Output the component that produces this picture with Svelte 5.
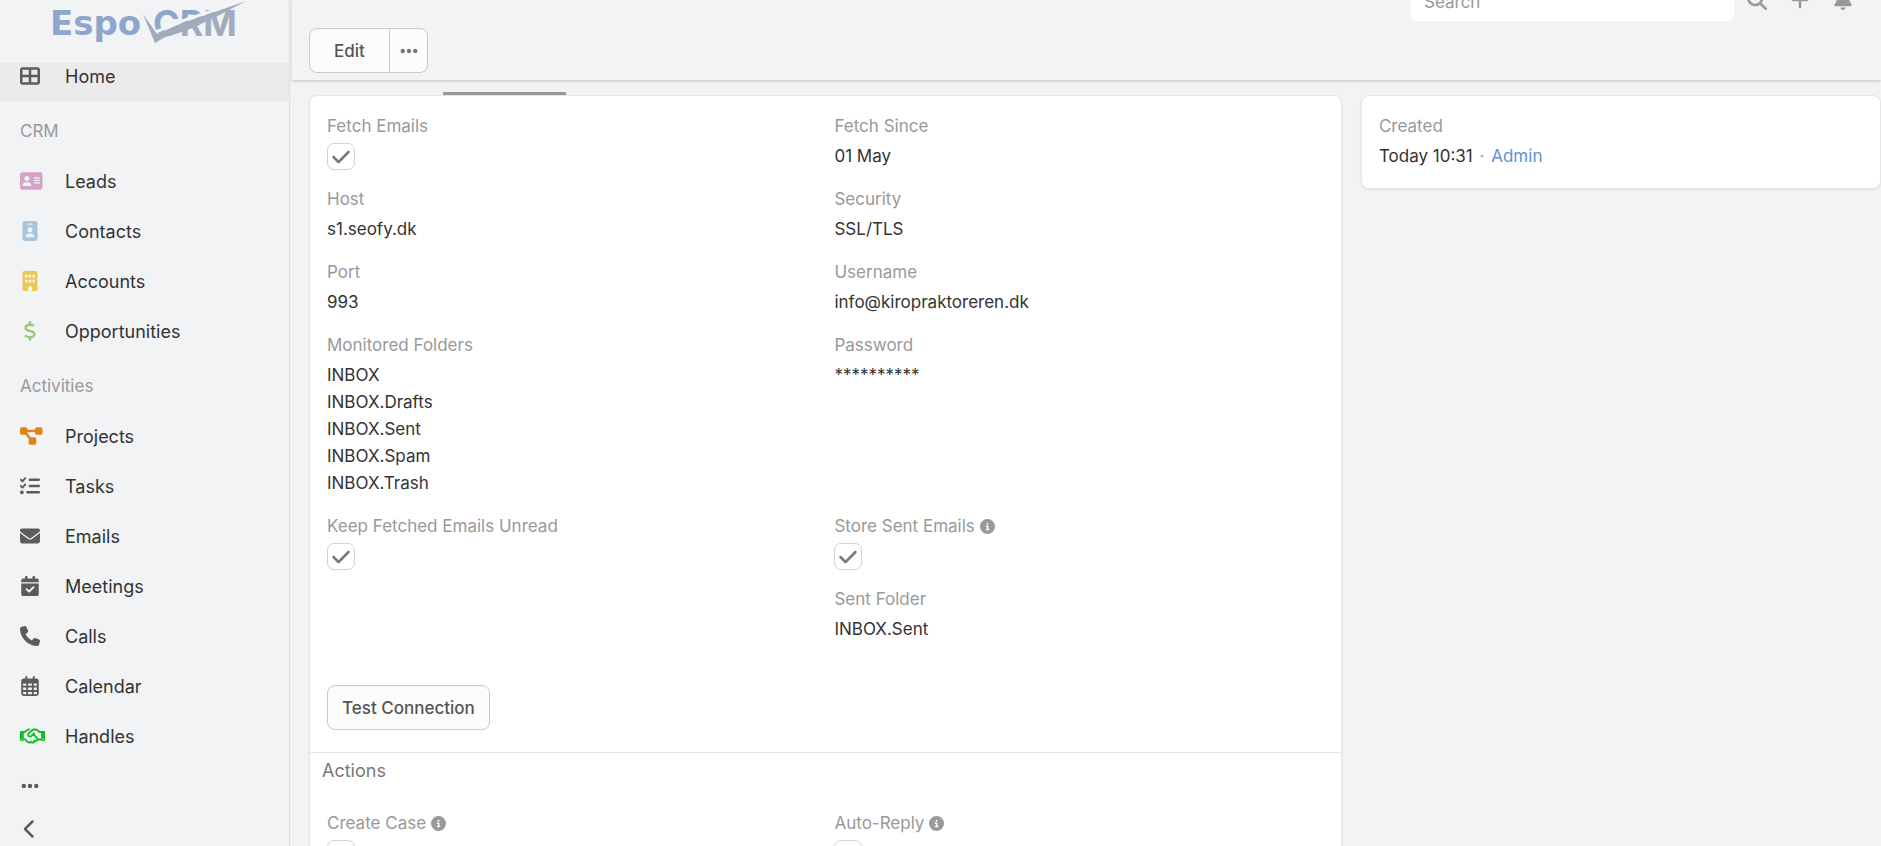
<script>
  // Solid icon set, drawn on a 512 unit high grid
  const icons = {
    home: { w: 512, d: 'M448 96l0 128-160 0 0-128 160 0zm0 192l0 128-160 0 0-128 160 0zM224 224L64 224 64 96l160 0 0 128zM64 288l160 0 0 128L64 416l0-128zM64 32C28.7 32 0 60.7 0 96L0 416c0 35.3 28.7 64 64 64l384 0c35.3 0 64-28.7 64-64l0-320c0-35.3-28.7-64-64-64L64 32z' },
    lead: { w: 576, d: 'M64 32C28.7 32 0 60.7 0 96L0 416c0 35.3 28.7 64 64 64l448 0c35.3 0 64-28.7 64-64l0-320c0-35.3-28.7-64-64-64L64 32zm80 256l64 0c44.2 0 80 35.8 80 80c0 8.8-7.2 16-16 16L80 384c-8.8 0-16-7.2-16-16c0-44.2 35.8-80 80-80zm-32-96a64 64 0 1 1 128 0 64 64 0 1 1 -128 0zm256-32l128 0c8.8 0 16 7.2 16 16s-7.2 16-16 16l-128 0c-8.8 0-16-7.2-16-16s7.2-16 16-16zm0 64l128 0c8.8 0 16 7.2 16 16s-7.2 16-16 16l-128 0c-8.8 0-16-7.2-16-16s7.2-16 16-16zm0 64l128 0c8.8 0 16 7.2 16 16s-7.2 16-16 16l-128 0c-8.8 0-16-7.2-16-16s7.2-16 16-16z' },
    contact: { w: 384, d: 'M64 0C28.7 0 0 28.7 0 64L0 448c0 35.3 28.7 64 64 64l256 0c35.3 0 64-28.7 64-64l0-384c0-35.3-28.7-64-64-64L64 0zm96 320l64 0c44.2 0 80 35.8 80 80c0 8.8-7.2 16-16 16L96 416c-8.8 0-16-7.2-16-16c0-44.2 35.8-80 80-80zm-32-96a64 64 0 1 1 128 0 64 64 0 1 1 -128 0zM144 64l96 0c8.8 0 16 7.2 16 16s-7.2 16-16 16l-96 0c-8.8 0-16-7.2-16-16s7.2-16 16-16z' },
    account: { w: 384, d: 'M48 0C21.5 0 0 21.5 0 48L0 464c0 26.5 21.5 48 48 48l96 0 0-80c0-26.5 21.5-48 48-48s48 21.5 48 48l0 80 96 0c26.5 0 48-21.5 48-48l0-416c0-26.5-21.5-48-48-48L48 0zM64 96h64v72H64zM160 96h64v72h-64zM256 96h64v72h-64zM64 224h64v72H64zM160 224h64v72h-64zM256 224h64v72h-64z' },
    dollar: { w: 320, d: 'M160 0c17.7 0 32 14.3 32 32l0 35.7c1.6 .2 3.1 .4 4.7 .7c.4 .1 .7 .1 1.1 .2l48 8.8c17.4 3.2 28.9 19.9 25.7 37.2s-19.9 28.9-37.2 25.7l-47.5-8.7c-31.3-4.6-58.9-1.5-78.3 6.2s-27.2 18.3-29 28.1c-2 10.7-.5 16.7 1.2 20.4c1.8 3.9 5.5 8.3 12.8 13.2c16.3 10.7 41.3 17.7 73.7 26.3l2.9 .8c28.6 7.6 63.6 16.8 89.6 33.8c14.2 9.3 27.6 21.9 35.9 39.5c8.5 17.9 10.3 37.9 6.4 59.2c-6.9 38-33.1 63.4-65.6 76.7c-13.7 5.6-28.6 9.2-44.4 11l0 33.4c0 17.7-14.3 32-32 32s-32-14.3-32-32l0-34.9c-.4-.1-.9-.1-1.3-.2l-.2 0c-24.4-3.8-64.5-14.3-91.5-26.3c-16.1-7.2-23.4-26.1-16.2-42.2s26.1-23.4 42.2-16.2c20.9 9.3 55.3 18.5 75.2 21.6c31.9 4.7 58.2 2 76-5.3c16.9-6.9 24.6-16.9 26.8-28.9c1.9-10.6 .4-16.7-1.3-20.4c-1.9-4-5.6-8.4-13-13.3c-16.4-10.7-41.5-17.7-74-26.3l-2.8-.7C119.4 279.3 84.4 270 58.4 253c-14.2-9.3-27.5-22-35.8-39.6c-8.4-17.9-10.1-37.9-6.1-59.2C23.7 116 52.3 91.2 84.8 78.3c13.3-5.3 27.9-8.9 43.2-11L128 32c0-17.7 14.3-32 32-32z' },
    project: { w: 576, d: 'M0 80C0 53.5 21.5 32 48 32l96 0c26.5 0 48 21.5 48 48l0 16 192 0 0-16c0-26.5 21.5-48 48-48l96 0c26.5 0 48 21.5 48 48l0 96c0 26.5-21.5 48-48 48l-96 0c-26.5 0-48-21.5-48-48l0-16-192 0 0 16c0 1.7-.1 3.4-.3 5L272 288l96 0c26.5 0 48 21.5 48 48l0 96c0 26.5-21.5 48-48 48l-96 0c-26.5 0-48-21.5-48-48l0-96c0-1.7 .1-3.4 .3-5L144 224l-96 0c-26.5 0-48-21.5-48-48L0 80z' },
    task: { w: 512, d: 'M152.1 38.2c9.9 8.9 10.7 24 1.8 33.9l-72 80c-4.4 4.9-10.6 7.8-17.2 7.9s-12.9-2.4-17.6-7L7 113C-2.3 103.6-2.3 88.4 7 79s24.6-9.4 33.9 0l22.1 22.1 55.1-61.2c8.9-9.9 24-10.7 33.9-1.8zm0 160c9.9 8.9 10.7 24 1.8 33.9l-72 80c-4.4 4.9-10.6 7.8-17.2 7.9s-12.9-2.4-17.6-7L7 273c-9.4-9.4-9.4-24.6 0-33.9s24.6-9.4 33.9 0l22.1 22.1 55.1-61.2c8.9-9.9 24-10.7 33.9-1.8zM224 96c0-17.7 14.3-32 32-32l224 0c17.7 0 32 14.3 32 32s-14.3 32-32 32l-224 0c-17.7 0-32-14.3-32-32zm0 160c0-17.7 14.3-32 32-32l224 0c17.7 0 32 14.3 32 32s-14.3 32-32 32l-224 0c-17.7 0-32-14.3-32-32zM160 416c0-17.7 14.3-32 32-32l288 0c17.7 0 32 14.3 32 32s-14.3 32-32 32l-288 0c-17.7 0-32-14.3-32-32zM48 368a48 48 0 1 1 0 96 48 48 0 1 1 0-96z' },
    email: { w: 512, d: 'M48 64C21.5 64 0 85.5 0 112c0 15.1 7.1 29.3 19.2 38.4L236.8 313.6c11.4 8.5 27 8.5 38.4 0L492.8 150.4c12.1-9.1 19.2-23.3 19.2-38.4c0-26.5-21.5-48-48-48L48 64zM0 176L0 384c0 35.3 28.7 64 64 64l384 0c35.3 0 64-28.7 64-64l0-208L294.4 339.2c-22.8 17.1-54 17.1-76.8 0L0 176z' },
    meeting: { w: 448, d: 'M128 0c17.7 0 32 14.3 32 32l0 32 128 0 0-32c0-17.7 14.3-32 32-32s32 14.3 32 32l0 32 48 0c26.5 0 48 21.5 48 48l0 48L0 160l0-48C0 85.5 21.5 64 48 64l48 0 0-32c0-17.7 14.3-32 32-32zM0 192l448 0 0 272c0 26.5-21.5 48-48 48L48 512c-26.5 0-48-21.5-48-48L0 192zM329 305c9.4-9.4 9.4-24.6 0-33.9s-24.6-9.4-33.9 0l-95 95-47-47c-9.4-9.4-24.6-9.4-33.9 0s-9.4 24.6 0 33.9l64 64c9.4 9.4 24.6 9.4 33.9 0L329 305z' },
    call: { w: 512, d: 'M164.9 24.6c-7.7-18.6-28-28.5-47.4-23.2l-88 24C12.1 30.2 0 46 0 64C0 311.4 200.6 512 448 512c18 0 33.8-12.1 38.6-29.5l24-88c5.3-19.4-4.6-39.7-23.2-47.4l-96-40c-16.3-6.8-35.2-2.1-46.3 11.6L304.7 368C234.3 334.7 177.3 277.7 144 207.3L193.3 167c13.7-11.2 18.4-30 11.6-46.3l-40-96z' },
    calendar: { w: 448, d: 'M152 24c0-13.3-10.7-24-24-24s-24 10.7-24 24l0 40L64 64C28.7 64 0 92.7 0 128l0 16 0 48L0 448c0 35.3 28.7 64 64 64l320 0c35.3 0 64-28.7 64-64l0-256 0-48 0-16c0-35.3-28.7-64-64-64l-40 0 0-40c0-13.3-10.7-24-24-24s-24 10.7-24 24l0 40L152 64l0-40zM48 192l80 0 0 56-80 0 0-56zm0 104l80 0 0 64-80 0 0-64zm128 0l96 0 0 64-96 0 0-64zm144 0l80 0 0 64-80 0 0-64zm80-48l-80 0 0-56 80 0 0 56zm0 160l0 40c0 8.8-7.2 16-16 16l-64 0 0-56 80 0zm-128 0l0 56-96 0 0-56 96 0zm-144 0l0 56-64 0c-8.8 0-16-7.2-16-16l0-40 80 0zM272 248l-96 0 0-56 96 0 0 56z' },
    handshake: { w: 640, d: 'M272.2 64.6l-51.1 51.1c-15.3 4.2-29.5 11.9-41.5 22.5L153 161.9C142.8 171 129.5 176 115.8 176L96 176l0 128c20.4 .6 39.8 8.9 54.3 23.4l35.6 35.6 7 7L219.9 397c6.2 6.2 16.4 6.2 22.6 0c1.7-1.7 3-3.7 3.7-5.8c2.8-7.7 9.3-13.5 17.3-15.3s16.4 .6 22.2 6.5L296.5 393c11.6 11.6 30.4 11.6 41.9 0c5.4-5.4 8.3-12.3 8.6-19.4c.4-8.8 5.6-16.6 13.6-20.4s17.3-3 24.4 2.1c9.4 6.7 22.5 5.8 30.9-2.6c9.4-9.4 9.4-24.6 0-33.9L340.1 243l-35.8 33c-27.3 25.2-69.2 25.6-97 .9c-31.7-28.2-32.4-77.4-1.6-106.5l70.1-66.2C303.2 78.4 339.4 64 377.1 64c36.1 0 71 13.3 97.9 37.2L505.1 128l38.9 0 40 0 40 0c8.8 0 16 7.2 16 16l0 208c0 17.7-14.3 32-32 32l-32 0c-11.8 0-22.2-6.4-27.7-16l-84.9 0c-3.4 6.7-7.9 13.1-13.5 18.7c-17.1 17.1-40.8 23.8-63 20.1c-3.6 7.3-8.5 14.1-14.6 20.2c-27.3 27.3-70 30-100.4 8.1c-25.1 20.8-62.5 19.5-86-4.1L159 404l-7-7-35.6-35.6c-5.5-5.5-12.7-8.7-20.4-9.3C96 369.7 81.6 384 64 384l-32 0c-17.7 0-32-14.3-32-32L0 144c0-8.8 7.2-16 16-16l40 0 40 0 19.8 0c2 0 3.9-.7 5.3-2l26.5-23.6C175.5 77.7 211.4 64 248.7 64L259 64c4.4 0 8.9 .2 13.2 .6zM544 320l0-144-48 0c-5.9 0-11.6-2.2-15.9-6.1l-36.9-32.8c-18.2-16.2-41.7-25.1-66.1-25.1c-25.4 0-49.8 9.7-68.3 27.1l-70.1 66.2c-10.3 9.8-10.1 26.3 .5 35.7c9.3 8.3 23.4 8.1 32.5-.3l71.9-66.4c9.7-9 24.9-8.4 33.9 1.4s8.4 24.9-1.4 33.9l-.8 .8 74.4 74.4c10 10 16.5 22.3 19.4 35.1l74.8 0zM64 336a16 16 0 1 0 -32 0 16 16 0 1 0 32 0zm528 16a16 16 0 1 0 0-32 16 16 0 1 0 0 32z' },
    ellipsis: { w: 448, d: 'M8 256a56 56 0 1 1 112 0A56 56 0 1 1 8 256zm160 0a56 56 0 1 1 112 0 56 56 0 1 1 -112 0zm216-56a56 56 0 1 1 0 112 56 56 0 1 1 0-112z' },
    left: { w: 320, d: 'M9.4 233.4c-12.5 12.5-12.5 32.8 0 45.3l192 192c12.5 12.5 32.8 12.5 45.3 0s12.5-32.8 0-45.3L77.3 256 246.6 86.6c12.5-12.5 12.5-32.8 0-45.3s-32.8-12.5-45.3 0l-192 192z' },
    search: { w: 512, d: 'M416 208c0 45.9-14.9 88.3-40 122.7L502.6 457.4c12.5 12.5 12.5 32.8 0 45.3s-32.8 12.5-45.3 0L330.7 376c-34.4 25.2-76.8 40-122.7 40C93.1 416 0 322.9 0 208S93.1 0 208 0S416 93.1 416 208zM208 352a144 144 0 1 0 0-288 144 144 0 1 0 0 288z' },
    plus: { w: 448, d: 'M256 80c0-17.7-14.3-32-32-32s-32 14.3-32 32l0 144L48 224c-17.7 0-32 14.3-32 32s14.3 32 32 32l144 0 0 144c0 17.7 14.3 32 32 32s32-14.3 32-32l0-144 144 0c17.7 0 32-14.3 32-32s-14.3-32-32-32l-144 0 0-144z' },
    bell: { w: 448, d: 'M224 0c-17.7 0-32 14.3-32 32l0 19.2C119 66 64 130.6 64 208l0 18.8c0 47-17.3 92.4-48.5 127.6l-7.4 8.3c-8.4 9.4-10.4 22.9-5.3 34.4S19.4 416 32 416l384 0c12.6 0 24-7.4 29.2-18.9s3.1-25-5.3-34.4l-7.4-8.3C401.3 319.2 384 273.9 384 226.8l0-18.8c0-77.4-55-142-128-156.8L256 32c0-17.7-14.3-32-32-32zm45.3 493.3c12-12 18.7-28.3 18.7-45.3l-64 0-64 0c0 17 6.7 33.3 18.7 45.3s28.3 18.7 45.3 18.7s33.3-6.7 45.3-18.7z' },
    info: { w: 512, d: 'M256 512A256 256 0 1 0 256 0a256 256 0 1 0 0 512zM216 336l24 0 0-64-24 0c-13.3 0-24-10.7-24-24s10.7-24 24-24l48 0c13.3 0 24 10.7 24 24l0 88 8 0c13.3 0 24 10.7 24 24s-10.7 24-24 24l-80 0c-13.3 0-24-10.7-24-24s10.7-24 24-24zm40-208a32 32 0 1 1 0 64 32 32 0 1 1 0-64z' },
    check: { w: 448, d: 'M438.6 105.4c12.5 12.5 12.5 32.8 0 45.3l-256 256c-12.5 12.5-32.8 12.5-45.3 0l-128-128c-12.5-12.5-12.5-32.8 0-45.3s32.8-12.5 45.3 0L160 338.7 393.4 105.4c12.5-12.5 32.8-12.5 45.3 0z' }
  };

  const menu = [
    {
      title: 'CRM',
      items: [
        { label: 'Leads', icon: 'lead', color: '#d6a2c9' },
        { label: 'Contacts', icon: 'contact', color: '#a4c5e0' },
        { label: 'Accounts', icon: 'account', color: '#edc755' },
        { label: 'Opportunities', icon: 'dollar', color: '#9fc77e' }
      ]
    },
    {
      title: 'Activities',
      items: [
        { label: 'Projects', icon: 'project', color: '#de8419' },
        { label: 'Tasks', icon: 'task' },
        { label: 'Emails', icon: 'email' },
        { label: 'Meetings', icon: 'meeting' },
        { label: 'Calls', icon: 'call' },
        { label: 'Calendar', icon: 'calendar' },
        { label: 'Handles', icon: 'handshake', color: '#13ba21' }
      ]
    }
  ];

  // Two cells per row, null leaves the cell empty
  const rows = [
    [{ id: 'fetch-emails', label: 'Fetch Emails', checked: true }, { label: 'Fetch Since', value: '01 May' }],
    [{ label: 'Host', value: 's1.seofy.dk' }, { label: 'Security', value: 'SSL/TLS' }],
    [{ label: 'Port', value: '993' }, { label: 'Username', value: 'info@kiropraktoreren.dk' }],
    [
      { label: 'Monitored Folders', list: ['INBOX', 'INBOX.Drafts', 'INBOX.Sent', 'INBOX.Spam', 'INBOX.Trash'] },
      { label: 'Password', value: '**********' }
    ],
    [
      { id: 'keep-unread', label: 'Keep Fetched Emails Unread', checked: true },
      { id: 'store-sent', label: 'Store Sent Emails', checked: true, info: true }
    ],
    [null, { label: 'Sent Folder', value: 'INBOX.Sent' }]
  ];

  const actionRows = [
    [
      { id: 'create-case', label: 'Create Case', checked: false, info: true },
      { id: 'auto-reply', label: 'Auto-Reply', checked: false, info: true }
    ]
  ];

  let search = '';
</script>

{#snippet icon(name, size = 20)}
  <svg
    class="icon"
    viewBox="0 0 {icons[name].w} 512"
    width={Math.max(size, (icons[name].w * size) / 512)}
    height={size}
    aria-hidden="true"
  >
    <path fill="currentColor" fill-rule="evenodd" d={icons[name].d} />
  </svg>
{/snippet}

{#snippet fields(list)}
  <div class="fields">
    {#each list.flat() as field}
      <div class="cell">
        {#if field}
          {#if field.id}
            <label class="label" for={field.id}>
              {field.label}
              {#if field.info}{@render icon('info', 15)}{/if}
            </label>
            <span class="check">
              <input type="checkbox" id={field.id} bind:checked={field.checked} />
              {#if field.checked}{@render icon('check', 20)}{/if}
            </span>
          {:else}
            <div class="label">{field.label}</div>
            {#if field.list}
              {#each field.list as line}
                <div class="value">{line}</div>
              {/each}
            {:else}
              <div class="value">{field.value}</div>
            {/if}
          {/if}
        {/if}
      </div>
    {/each}
  </div>
{/snippet}

<div class="app">
  <aside class="sidebar">
    <a class="logo" href="#home" aria-label="EspoCRM">
      <svg width="210" height="63" viewBox="40 0 210 63">
        <defs>
          <!-- CRM turns from blue to grey where the tick crosses it -->
          <linearGradient id="crm" gradientUnits="userSpaceOnUse" x1="190" y1="10" x2="198" y2="30">
            <stop offset="0.5" stop-color="#8ea6cc" />
            <stop offset="0.5" stop-color="#a0abbe" />
          </linearGradient>
        </defs>
        <text class="espo" x="50" y="35" fill="#8ea6cc">Espo</text>
        <text class="crm" x="153" y="36" fill="url(#crm)">CRM</text>
        <path d="M142 11L156 32L182 21L212 11L246 -1" fill="none" stroke="#f1f3f5" stroke-width="3" />
        <path d="M143 14L157 34L182 23L212 13L246 1L214 18L190 29Q174 35 165 37L155 43Z" fill="#a0abbe" />
      </svg>
    </a>

    <nav>
      <a class="item active" href="#home">
        <span class="slot">{@render icon('home')}</span>
        Home
      </a>
      {#each menu as group}
        <div class="group">{group.title}</div>
        {#each group.items as item}
          <a class="item" href="#{item.label.toLowerCase()}">
            <span class="slot" style:color={item.color}>{@render icon(item.icon)}</span>
            {item.label}
          </a>
        {/each}
      {/each}
      <button class="item more" type="button" aria-label="More">{@render icon('ellipsis')}</button>
    </nav>

    <button class="collapse" type="button" aria-label="Collapse menu">{@render icon('left')}</button>
  </aside>

  <main>
    <header>
      <div class="navbar">
        <input class="search" type="text" placeholder="Search" aria-label="Search" bind:value={search} />
        <button type="button" aria-label="Run search">{@render icon('search')}</button>
        <button type="button" aria-label="Create">{@render icon('plus')}</button>
        <button type="button" aria-label="Notifications">{@render icon('bell')}</button>
      </div>
      <div class="buttons">
        <button class="btn edit" type="button">Edit</button>
        <button class="btn dropdown" type="button" aria-label="Actions menu">{@render icon('ellipsis')}</button>
      </div>
    </header>

    <div class="content">
      <div class="tabs"><span class="tab"></span></div>
      <div class="columns">
        <section class="panel">
          <div class="panel-body">
            {@render fields(rows)}
            <button class="btn test" type="button">Test Connection</button>
          </div>
          <h4>Actions</h4>
          <div class="panel-body actions">
            {@render fields(actionRows)}
          </div>
        </section>

        <section class="panel side">
          <div class="panel-body">
            <div class="label">Created</div>
            <div class="value">Today 10:31 <span class="dot">·</span> <a href="#admin">Admin</a></div>
          </div>
        </section>
      </div>
    </div>
  </main>
</div>

<style>
  :global(body) {
    background: #f1f3f5;
    font-family: Inter, 'Liberation Sans', sans-serif;
    font-size: 17px;
    color: #333;
  }

  .app {
    display: flex;
    height: 100vh;
    overflow: hidden;
  }

  .app :global(*) {
    box-sizing: border-box;
  }

  button,
  input {
    font: inherit;
  }

  button {
    padding: 0;
    border: none;
    background: none;
    color: inherit;
    cursor: pointer;
  }

  .icon {
    display: block;
    flex: none;
  }

  .sidebar {
    display: flex;
    flex-direction: column;
    flex: none;
    width: 290px;
    border-right: 1px solid #dcdfe3;
  }

  .logo {
    flex: none;
    height: 63px;
    padding-left: 40px;
  }

  .logo svg {
    display: block;
    font-weight: 700;
  }

  .espo {
    font-family: 'DejaVu Sans', sans-serif;
    font-size: 34px;
  }

  .crm {
    font-size: 36px;
  }

  .item {
    display: flex;
    align-items: center;
    width: 100%;
    height: 50px;
    padding: 0 20px;
    font-size: 18px;
    color: #333;
    text-decoration: none;
  }

  .item.active {
    height: 38px;
    padding-bottom: 12px;
    background: #ebebeb;
  }

  .slot {
    width: 45px;
    color: #5c5c5c;
  }

  .more,
  .collapse {
    color: #5c5c5c;
  }

  .group {
    padding: 16px 20px 11px;
    line-height: 28px;
    color: #999;
  }

  .collapse {
    width: 60px;
    padding: 8px 20px;
  }

  main {
    display: flex;
    flex-direction: column;
    flex: 1;
    min-width: 0;
  }

  header {
    flex: none;
    height: 80px;
    margin-left: 2px;
    padding-left: 17px;
    box-shadow: 0 1px 3px rgba(0, 0, 0, 0.2);
  }

  /* The navbar is scrolled half out of view */
  .navbar {
    display: flex;
    justify-content: flex-end;
    align-items: flex-end;
    gap: 23px;
    height: 21px;
    padding-right: 28px;
    overflow: hidden;
    color: #999;
  }

  .navbar button {
    height: 42px;
  }

  .search {
    width: 323px;
    height: 39px;
    margin-right: -10px;
    padding: 0 13px;
    border: none;
    border-radius: 6px;
    background: #fff;
    color: #333;
  }

  .search::placeholder {
    color: #999;
  }

  .buttons {
    display: flex;
    padding-top: 7px;
  }

  .btn {
    height: 45px;
    border: 1px solid #c4cacd;
    border-radius: 8px;
    background: #fcfcfc;
    color: #555;
    font-weight: 500;
  }

  .edit {
    width: 81px;
    border-radius: 8px 0 0 8px;
  }

  .dropdown {
    display: flex;
    justify-content: center;
    align-items: center;
    width: 39px;
    margin-left: -1px;
    border-radius: 0 8px 8px 0;
    color: #777;
  }

  .content {
    padding: 12px 0 0 19px;
  }

  .tabs {
    display: flex;
    padding-left: 134px;
  }

  .tab {
    width: 123px;
    height: 3px;
    background: #999;
  }

  .columns {
    display: grid;
    grid-template-columns: 143fr 72fr;
    align-items: start;
    gap: 19px;
  }

  .panel {
    border: 1px solid #e3e6e9;
    border-radius: 8px;
    background: #fff;
    box-shadow: 0 1px 2px rgba(0, 0, 0, 0.08);
  }

  .panel-body {
    padding: 16px 17px 22px;
  }

  .panel-body.actions {
    padding-top: 20px;
  }

  .side .panel-body {
    padding-bottom: 18px;
  }

  .fields {
    display: grid;
    grid-template-columns: 1fr 1fr;
    gap: 15px 18px;
  }

  .label {
    display: flex;
    align-items: center;
    gap: 5px;
    margin-bottom: 3px;
    line-height: 28px;
    color: #999;
  }

  .value {
    line-height: 27px;
  }

  .check {
    display: inline-grid;
    place-items: center;
    vertical-align: top;
    color: #777;
  }

  .check input {
    grid-area: 1 / 1;
    appearance: none;
    width: 28px;
    height: 27px;
    margin: 0;
    border: 1px solid #ced4d6;
    border-radius: 7px;
    background: #fff;
  }

  .check .icon {
    grid-area: 1 / 1;
    pointer-events: none;
  }

  .test {
    display: block;
    margin-top: 42px;
    padding: 0 14px;
  }

  h4 {
    margin: 0;
    padding: 5px 12px;
    border-top: 1px solid #e3e6e9;
    font-size: 18px;
    font-weight: 400;
    line-height: 26px;
    color: #777;
  }

  .dot {
    margin: 0 2px;
    color: #999;
  }

  a {
    color: #6192d5;
    text-decoration: none;
  }
</style>
